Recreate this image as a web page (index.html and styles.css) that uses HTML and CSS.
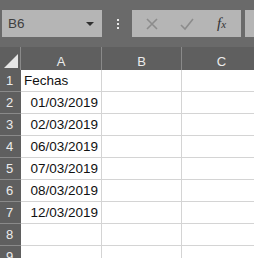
FILE: index.html
```html
<!DOCTYPE html>
<html lang="es">
<head>
  <meta charset="UTF-8" />
  <title>Fechas</title>
  <link rel="stylesheet" href="styles.css">
</head>
<body>
  <div class="toolbar">
    <div class="name-box">
      <span>B6</span>
      <span class="caret"></span>
    </div>
    <div class="dots"><i></i><i></i><i></i></div>
    <div class="formula-buttons">
      <svg class="icon" width="14" height="14" viewBox="0 0 14 14">
        <path d="M2 2 L12 12 M12 2 L2 12" stroke="#8c8c8c" stroke-width="1.6" fill="none" />
      </svg>
      <svg class="icon" width="14" height="14" viewBox="0 0 14 14">
        <path d="M1 8 L5 12 L13 2" stroke="#8c8c8c" stroke-width="1.6" fill="none" />
      </svg>
      <span class="fx">f<small>x</small></span>
    </div>
    <div class="formula-input"></div>
  </div>

  <div class="sheet">
    <div class="corner"><span class="tri"></span></div>
    <div class="col-head">A</div>
    <div class="col-head">B</div>
    <div class="col-head">C</div>

    <div class="row-head">1</div><div class="cell">Fechas</div><div class="cell"></div><div class="cell"></div>
    <div class="row-head">2</div><div class="cell num">01/03/2019</div><div class="cell"></div><div class="cell"></div>
    <div class="row-head">3</div><div class="cell num">02/03/2019</div><div class="cell"></div><div class="cell"></div>
    <div class="row-head">4</div><div class="cell num">06/03/2019</div><div class="cell"></div><div class="cell"></div>
    <div class="row-head">5</div><div class="cell num">07/03/2019</div><div class="cell"></div><div class="cell"></div>
    <div class="row-head">6</div><div class="cell num">08/03/2019</div><div class="cell"></div><div class="cell"></div>
    <div class="row-head">7</div><div class="cell num">12/03/2019</div><div class="cell"></div><div class="cell"></div>
    <div class="row-head">8</div><div class="cell"></div><div class="cell"></div><div class="cell"></div>
    <div class="row-head">9</div><div class="cell"></div><div class="cell"></div><div class="cell"></div>
  </div>
</body>
</html>
```

FILE: styles.css
```css
body {
  margin: 0;
  width: 254px;
  height: 258px;
  overflow: hidden;
  background-color: #6a6a6a;
  font-family: 'Liberation Sans', Arial, sans-serif;
}

.toolbar {
  display: flex;
  align-items: center;
  height: 47px;
  padding-left: 2px;
  box-sizing: border-box;
}

.name-box {
  display: flex;
  align-items: center;
  justify-content: space-between;
  width: 100px;
  height: 27px;
  padding: 0 8px 0 6px;
  box-sizing: border-box;
  background-color: #b5b5b5;
  color: #404040;
  font-size: 13.5px;
}

.caret {
  width: 0;
  height: 0;
  border-left: 4px solid transparent;
  border-right: 4px solid transparent;
  border-top: 4px solid #303030;
}

.dots {
  display: flex;
  flex-direction: column;
  gap: 2px;
  margin: 0 13px 0 15px;
}

.dots i {
  display: block;
  width: 2px;
  height: 2px;
  background-color: #e8e8e8;
}

.formula-buttons {
  display: flex;
  align-items: center;
  width: 109px;
  height: 27px;
  padding-left: 13px;
  box-sizing: border-box;
  background-color: #b5b5b5;
}

.icon {
  margin-right: 21px;
}

.fx {
  margin-left: 2px;
  font-family: 'Liberation Serif', serif;
  font-style: italic;
  font-size: 15px;
  color: #333;
}

.fx small {
  font-size: 11px;
}

.formula-input {
  flex: 1;
  height: 27px;
  margin-left: 4px;
  background-color: #b5b5b5;
}

.sheet {
  display: grid;
  grid-template-columns: 21px 81px 80px 80px;
  grid-template-rows: 23px repeat(9, 22px);
  background-color: #fff;
}

.corner, .col-head, .row-head {
  background-color: #5f5f5f;
  color: #ececec;
  font-size: 13px;
  box-sizing: border-box;
}

.corner {
  position: relative;
  border-right: 1px solid #8a8a8a;
}

.tri {
  position: absolute;
  right: 2px;
  bottom: 2px;
  width: 0;
  height: 0;
  border-left: 14px solid transparent;
  border-bottom: 14px solid #e6e6e6;
}

.col-head {
  display: flex;
  align-items: center;
  justify-content: center;
  border-right: 1px solid #8a8a8a;
  padding-top: 6px;
}

.row-head {
  display: flex;
  align-items: center;
  padding-left: 6px;
  border-bottom: 1px solid #8a8a8a;
}

.cell {
  display: flex;
  align-items: center;
  padding: 0 3px;
  box-sizing: border-box;
  border-right: 1px solid #d4d4d4;
  border-bottom: 1px solid #d4d4d4;
  font-size: 13.5px;
  color: #111;
  white-space: nowrap;
}

.cell.num {
  justify-content: flex-end;
}
```
